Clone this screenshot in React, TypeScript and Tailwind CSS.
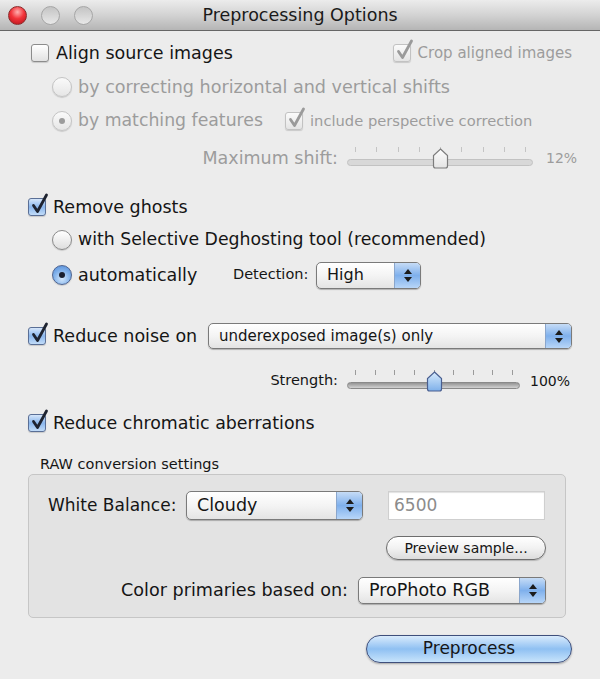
import React from 'react';

const ink = 'text-[#151515]';
const dim = 'text-[#9c9c9c]';

function CheckBox({ checked, disabled }: { checked?: boolean; disabled?: boolean }) {
  const box = disabled
    ? 'border-[#c2c2c2] bg-gradient-to-b from-[#fbfbfb] to-[#e4e4e4]'
    : checked
      ? 'border-[#5a6f96] bg-gradient-to-b from-[#d6e6fa] via-[#8ab6ec] to-[#c2dcf8]'
      : 'border-[#8c8c8c] bg-gradient-to-b from-[#ffffff] to-[#e2e2e2]';
  return (
    <span className={`relative inline-block w-[18px] h-[18px] shrink-0 rounded-[3px] border shadow-[0_1px_1px_rgba(0,0,0,0.15)] ${box}`}>
      {checked && (
        <svg className="absolute left-[2px] top-[-6px]" width="18" height="22" viewBox="0 0 18 22">
          <path
            d="M2.5 12.5 L6.5 18.5 L15.5 2"
            fill="none"
            stroke={disabled ? '#9a9a9a' : '#1e2330'}
            strokeWidth="2.8"
            strokeLinecap="round"
            strokeLinejoin="round"
          />
        </svg>
      )}
    </span>
  );
}

function Radio({ on, disabled }: { on?: boolean; disabled?: boolean }) {
  const c = disabled
    ? 'border-[#c4c4c4] bg-gradient-to-b from-[#fafafa] to-[#e6e6e6]'
    : on
      ? 'border-[#4f6591] bg-[radial-gradient(circle_at_50%_70%,#d4e8fc_0%,#7fb0ea_55%,#4c86d6_100%)]'
      : 'border-[#8a8a8a] bg-gradient-to-b from-[#ffffff] to-[#dedede]';
  return (
    <span className={`inline-flex items-center justify-center w-[20px] h-[20px] shrink-0 rounded-full border shadow-[0_1px_1px_rgba(0,0,0,0.15)] ${c}`}>
      {on && <span className={`w-[6px] h-[6px] rounded-full ${disabled ? 'bg-[#9c9c9c]' : 'bg-[#1b2030]'}`} />}
    </span>
  );
}

function Select({ text, w, h = 27, size }: { text: string; w: number; h?: number; size: string }) {
  return (
    <div
      className="flex items-stretch rounded-[5px] border border-[#7a7a7a] bg-gradient-to-b from-[#ffffff] via-[#f4f4f4] to-[#e4e4e4] shadow-[0_1px_1px_rgba(0,0,0,0.25)] overflow-hidden"
      style={{ width: w, height: h }}
    >
      <span className={`flex-1 flex items-center pl-[10px] ${size} ${ink}`}>{text}</span>
      <span className="w-[26px] flex flex-col items-center justify-center gap-[3px] border-l border-[#8aa6cc] bg-gradient-to-b from-[#c6dcf6] via-[#7fb0ec] to-[#b8d6f8]">
        <svg width="8" height="5" viewBox="0 0 8 5"><path d="M0 5 L4 0 L8 5 Z" fill="#1c1c1c" /></svg>
        <svg width="8" height="5" viewBox="0 0 8 5"><path d="M0 0 L4 5 L8 0 Z" fill="#1c1c1c" /></svg>
      </span>
    </div>
  );
}

function Slider({ w, pos, disabled }: { w: number; pos: number; disabled?: boolean }) {
  const ticks = Array.from({ length: 9 }, (_, i) => i);
  return (
    <div className="relative h-[22px]" style={{ width: w }}>
      {ticks.map((i) => (
        <span
          key={i}
          className={`absolute top-0 w-px h-[5px] ${disabled ? 'bg-[#c4c4c4]' : 'bg-[#9a9a9a]'}`}
          style={{ left: 8 + ((w - 16) * i) / 8 }}
        />
      ))}
      <span className={`absolute left-0 right-0 top-[12px] h-[7px] rounded-full border ${disabled ? 'border-[#c2c2c2] bg-[#d8d8d8]' : 'border-[#8a8a8a] bg-gradient-to-b from-[#959595] to-[#d2d2d2]'}`} />
      <svg className="absolute top-[1px]" style={{ left: 8 + (w - 16) * pos - 8 }} width="17" height="21" viewBox="0 0 17 21">
        <defs>
          <linearGradient id={disabled ? 'thd' : 'thb'} x1="0" y1="0" x2="0" y2="1">
            <stop offset="0" stopColor={disabled ? '#fdfdfd' : '#d8ebfc'} />
            <stop offset="1" stopColor={disabled ? '#e4e4e4' : '#7eb0ea'} />
          </linearGradient>
        </defs>
        <path
          d="M8.5 1 L15.5 7.5 L15.5 18 Q15.5 20 13.5 20 L3.5 20 Q1.5 20 1.5 18 L1.5 7.5 Z"
          fill={`url(#${disabled ? 'thd' : 'thb'})`}
          stroke={disabled ? '#7c7c7c' : '#4a5f90'}
          strokeWidth="1.2"
        />
      </svg>
    </div>
  );
}

export default function App() {
  return (
    <div className="w-[600px] h-[679px] flex flex-col bg-[#ececec] font-['DejaVu_Sans',sans-serif] overflow-hidden">
      {/* title bar */}
      <div className="h-[31px] shrink-0 grid grid-cols-[1fr_auto_1fr] items-center border-b border-[#666] bg-gradient-to-b from-[#ececec] via-[#d3d3d3] to-[#b5b5b5]">
        <div className="flex items-center gap-[14px] pl-[8px]">
          <span className="w-[19px] h-[19px] rounded-full border border-[#8c2a2a] bg-[radial-gradient(circle_at_50%_30%,#ffb0b0_0%,#f2343a_45%,#b30f17_100%)]" />
          <span className="w-[19px] h-[19px] rounded-full border border-[#a6a6a6] bg-gradient-to-b from-[#c4c4c4] to-[#e8e8e8]" />
          <span className="w-[19px] h-[19px] rounded-full border border-[#a6a6a6] bg-gradient-to-b from-[#c4c4c4] to-[#e8e8e8]" />
        </div>
        <span className="text-[17.5px] text-[#1a1a1a] pt-[1px]">Preprocessing Options</span>
        <span />
      </div>

      {/* align */}
      <div className="mt-[9px] h-[26px] flex items-center justify-between pl-[31px] pr-[28px]">
        <div className="flex items-center gap-[7px]">
          <CheckBox />
          <span className={`text-[17.5px] ${ink}`}>Align source images</span>
        </div>
        <div className="flex items-center gap-[7px]">
          <CheckBox checked disabled />
          <span className={`text-[15px] ${dim}`}>Crop aligned images</span>
        </div>
      </div>
      <div className="mt-[8px] h-[26px] flex items-center gap-[6px] pl-[52px]">
        <Radio disabled />
        <span className={`text-[17.6px] ${dim}`}>by correcting horizontal and vertical shifts</span>
      </div>
      <div className="mt-[8px] h-[26px] flex items-center pl-[52px]">
        <Radio on disabled />
        <span className={`ml-[6px] w-[207px] text-[17.3px] ${dim}`}>by matching features</span>
        <CheckBox checked disabled />
        <span className={`ml-[7px] text-[14.7px] ${dim}`}>include perspective correction</span>
      </div>
      <div className="mt-[11px] h-[26px] flex items-center">
        <span className={`w-[338px] text-right text-[17.5px] ${dim}`}>Maximum shift:</span>
        <span className="ml-[9px]"><Slider w={186} pos={0.5} disabled /></span>
        <span className={`ml-[13px] text-[14px] ${dim}`}>12%</span>
      </div>

      {/* ghosts */}
      <div className="mt-[23px] h-[26px] flex items-center gap-[7px] pl-[28px]">
        <CheckBox checked />
        <span className={`text-[17.5px] ${ink}`}>Remove ghosts</span>
      </div>
      <div className="mt-[7px] h-[26px] flex items-center gap-[6px] pl-[52px]">
        <Radio />
        <span className={`text-[17.3px] ${ink}`}>with Selective Deghosting tool (recommended)</span>
      </div>
      <div className="mt-[9px] h-[26px] flex items-center pl-[52px]">
        <Radio on />
        <span className={`ml-[6px] w-[155px] text-[17.5px] ${ink}`}>automatically</span>
        <span className={`w-[83px] text-[14.5px] ${ink}`}>Detection:</span>
        <Select text="High" w={105} size="text-[16px]" />
      </div>

      {/* noise */}
      <div className="mt-[35px] h-[26px] flex items-center pl-[28px]">
        <CheckBox checked />
        <span className={`ml-[7px] w-[155px] text-[17.5px] ${ink}`}>Reduce noise on</span>
        <Select text="underexposed image(s) only" w={364} h={26} size="text-[15px]" />
      </div>
      <div className="mt-[19px] h-[26px] flex items-center">
        <span className={`w-[338px] text-right text-[14.5px] ${ink}`}>Strength:</span>
        <span className="ml-[9px]"><Slider w={173} pos={0.5} /></span>
        <span className={`ml-[10px] text-[14px] ${ink}`}>100%</span>
      </div>
      <div className="mt-[16px] h-[26px] flex items-center gap-[7px] pl-[28px]">
        <CheckBox checked />
        <span className={`text-[17.4px] ${ink}`}>Reduce chromatic aberrations</span>
      </div>

      {/* raw */}
      <span className={`mt-[20px] pl-[40px] h-[16px] leading-[16px] text-[14.5px] ${ink}`}>RAW conversion settings</span>
      <div className="mt-[2px] ml-[28px] w-[538px] h-[144px] rounded-[5px] border border-[#c6c6c6] bg-[#e3e3e3] flex flex-col">
        <div className="mt-[16px] h-[29px] flex items-center pl-[19px]">
          <span className={`w-[138px] text-[17px] ${ink}`}>White Balance:</span>
          <Select text="Cloudy" w={177} h={29} size="text-[17.5px]" />
          <span className="ml-[25px] w-[157px] h-[29px] flex items-center pl-[5px] bg-white border border-[#cfcfcf] shadow-[inset_0_1px_1px_rgba(0,0,0,0.12)] text-[17px] text-[#8c8c8c]">6500</span>
        </div>
        <div className="mt-[16px] flex justify-end pr-[19px]">
          <span className={`w-[160px] h-[24px] flex items-center justify-center rounded-full border border-[#6e6e6e] bg-gradient-to-b from-[#ffffff] via-[#f2f2f2] to-[#dcdcdc] shadow-[0_1px_1px_rgba(0,0,0,0.2)] text-[14px] ${ink}`}>
            Preview sample...
          </span>
        </div>
        <div className="mt-[17px] h-[27px] flex items-center justify-end pr-[19px]">
          <span className={`text-[17.6px] ${ink}`}>Color primaries based on:</span>
          <span className="ml-[10px]"><Select text="ProPhoto RGB" w={188} size="text-[17.5px]" /></span>
        </div>
      </div>

      <div className="mt-[17px] flex justify-end pr-[28px]">
        <span className="w-[206px] h-[28px] flex items-center justify-center rounded-full border border-[#3f4f7c] bg-gradient-to-b from-[#d9ebfc] via-[#8fc0f2] to-[#c8e4fb] shadow-[0_1px_2px_rgba(0,0,0,0.3)] text-[17px] text-[#161616]">
          Preprocess
        </span>
      </div>
    </div>
  );
}
